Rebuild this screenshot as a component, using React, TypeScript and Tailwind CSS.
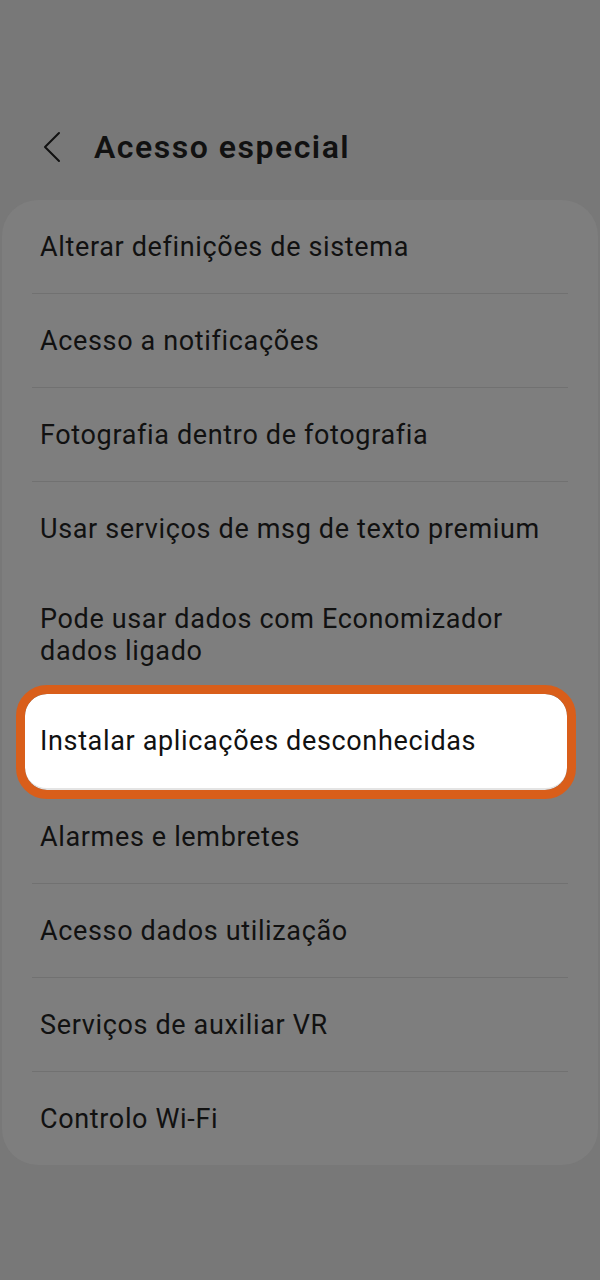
const items = [
  "Alterar definições de sistema",
  "Acesso a notificações",
  "Fotografia dentro de fotografia",
  "Usar serviços de msg de texto premium",
  "Pode usar dados com Economizador dados ligado",
]

const itemsAfter = [
  "Alarmes e lembretes",
  "Acesso dados utilização",
  "Serviços de auxiliar VR",
  "Controlo Wi-Fi",
]

function Divider() {
  return <div className="mx-[30px] h-px bg-[#717171]" />
}

function Row({ label, tall = false }: { label: string; tall?: boolean }) {
  return (
    <div
      className={`flex items-center pl-[38px] pr-[30px] text-[27px] leading-[32px] tracking-[0.65px] text-[#111] ${
        tall ? "h-[119px]" : "h-[93px] whitespace-nowrap"
      }`}
    >
      {label}
    </div>
  )
}

export default function App() {
  return (
    <div className="h-[1280px] w-full overflow-hidden bg-[#787878] pt-[117px] font-['Roboto',sans-serif]">
      {/* Header */}
      <div className="mb-[23px] flex h-[60px] items-center">
        <svg className="ml-[42px] h-[32px] w-[20px]" viewBox="0 0 20 32" fill="none">
          <polyline points="17,2 3,16 17,30" stroke="#111" strokeWidth="2" strokeLinecap="round" strokeLinejoin="round" />
        </svg>
        <h1 className="ml-[32px] text-[32px] font-semibold tracking-[1.5px] text-[#111]">Acesso especial</h1>
      </div>

      {/* Card */}
      <div className="mx-[2px] rounded-[36px] bg-[#7e7e7e]">
        {items.map((label, i) => (
          <div key={label}>
            <Row label={label} tall={i === 4} />
            {i < 3 && <Divider />}
          </div>
        ))}

        {/* Highlighted row */}
        <div className="ml-[23px] mr-[31px] flex h-[96px] items-center whitespace-nowrap rounded-[22px] border-b-2 border-[#e4e4e4] bg-white pl-[15px] text-[27px] tracking-[0.65px] text-[#111] outline-[9px] outline-solid outline-[#d95e1a]">
          Instalar aplicações desconhecidas
        </div>

        {itemsAfter.map((label, i) => (
          <div key={label}>
            {i > 0 && <Divider />}
            <Row label={label} />
          </div>
        ))}
      </div>
    </div>
  )
}
